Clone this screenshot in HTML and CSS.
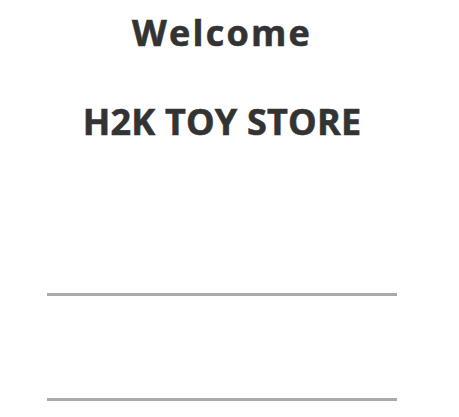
FILE: index.html
```html
<!DOCTYPE html>
<html>
<head>
<meta charset="utf-8">
<link rel="stylesheet" href="styles.css">
</head>
<body>
<main class="wrap">
  <h1 class="title title-welcome">Welcome</h1>
  <h1 class="title title-store">H2K TOY STORE</h1>
  <form class="login">
    <input class="field" type="text" aria-label="Username">
    <input class="field" type="password" aria-label="Password">
  </form>
</main>
</body>
</html>
```
FILE: styles.css
```css
html, body {
  margin: 0;
  padding: 0;
  background: #fff;
}
.wrap {
  width: 350px;
  margin-left: 47px;
  padding-top: 8px;
}
.title {
  margin: 0;
  text-align: center;
  font-family: "Open Sans", "Noto Sans", sans-serif;
  font-weight: 700;
  font-size: 36px;
  line-height: 50px;
  color: #333;
  -webkit-text-stroke: 0.6px #333;
}
.title-welcome {
  letter-spacing: 2.2px;
}
.title-store {
  margin-top: 39px;
  letter-spacing: 0.2px;
}
.login {
  display: flex;
  flex-direction: column;
  gap: 62px;
  margin-top: 106px;
}
.field {
  display: block;
  box-sizing: content-box;
  width: 350px;
  height: 40px;
  padding: 0;
  margin: 0;
  border: none;
  border-bottom: 3px solid #aaa;
  background: transparent;
  outline: none;
}
```
